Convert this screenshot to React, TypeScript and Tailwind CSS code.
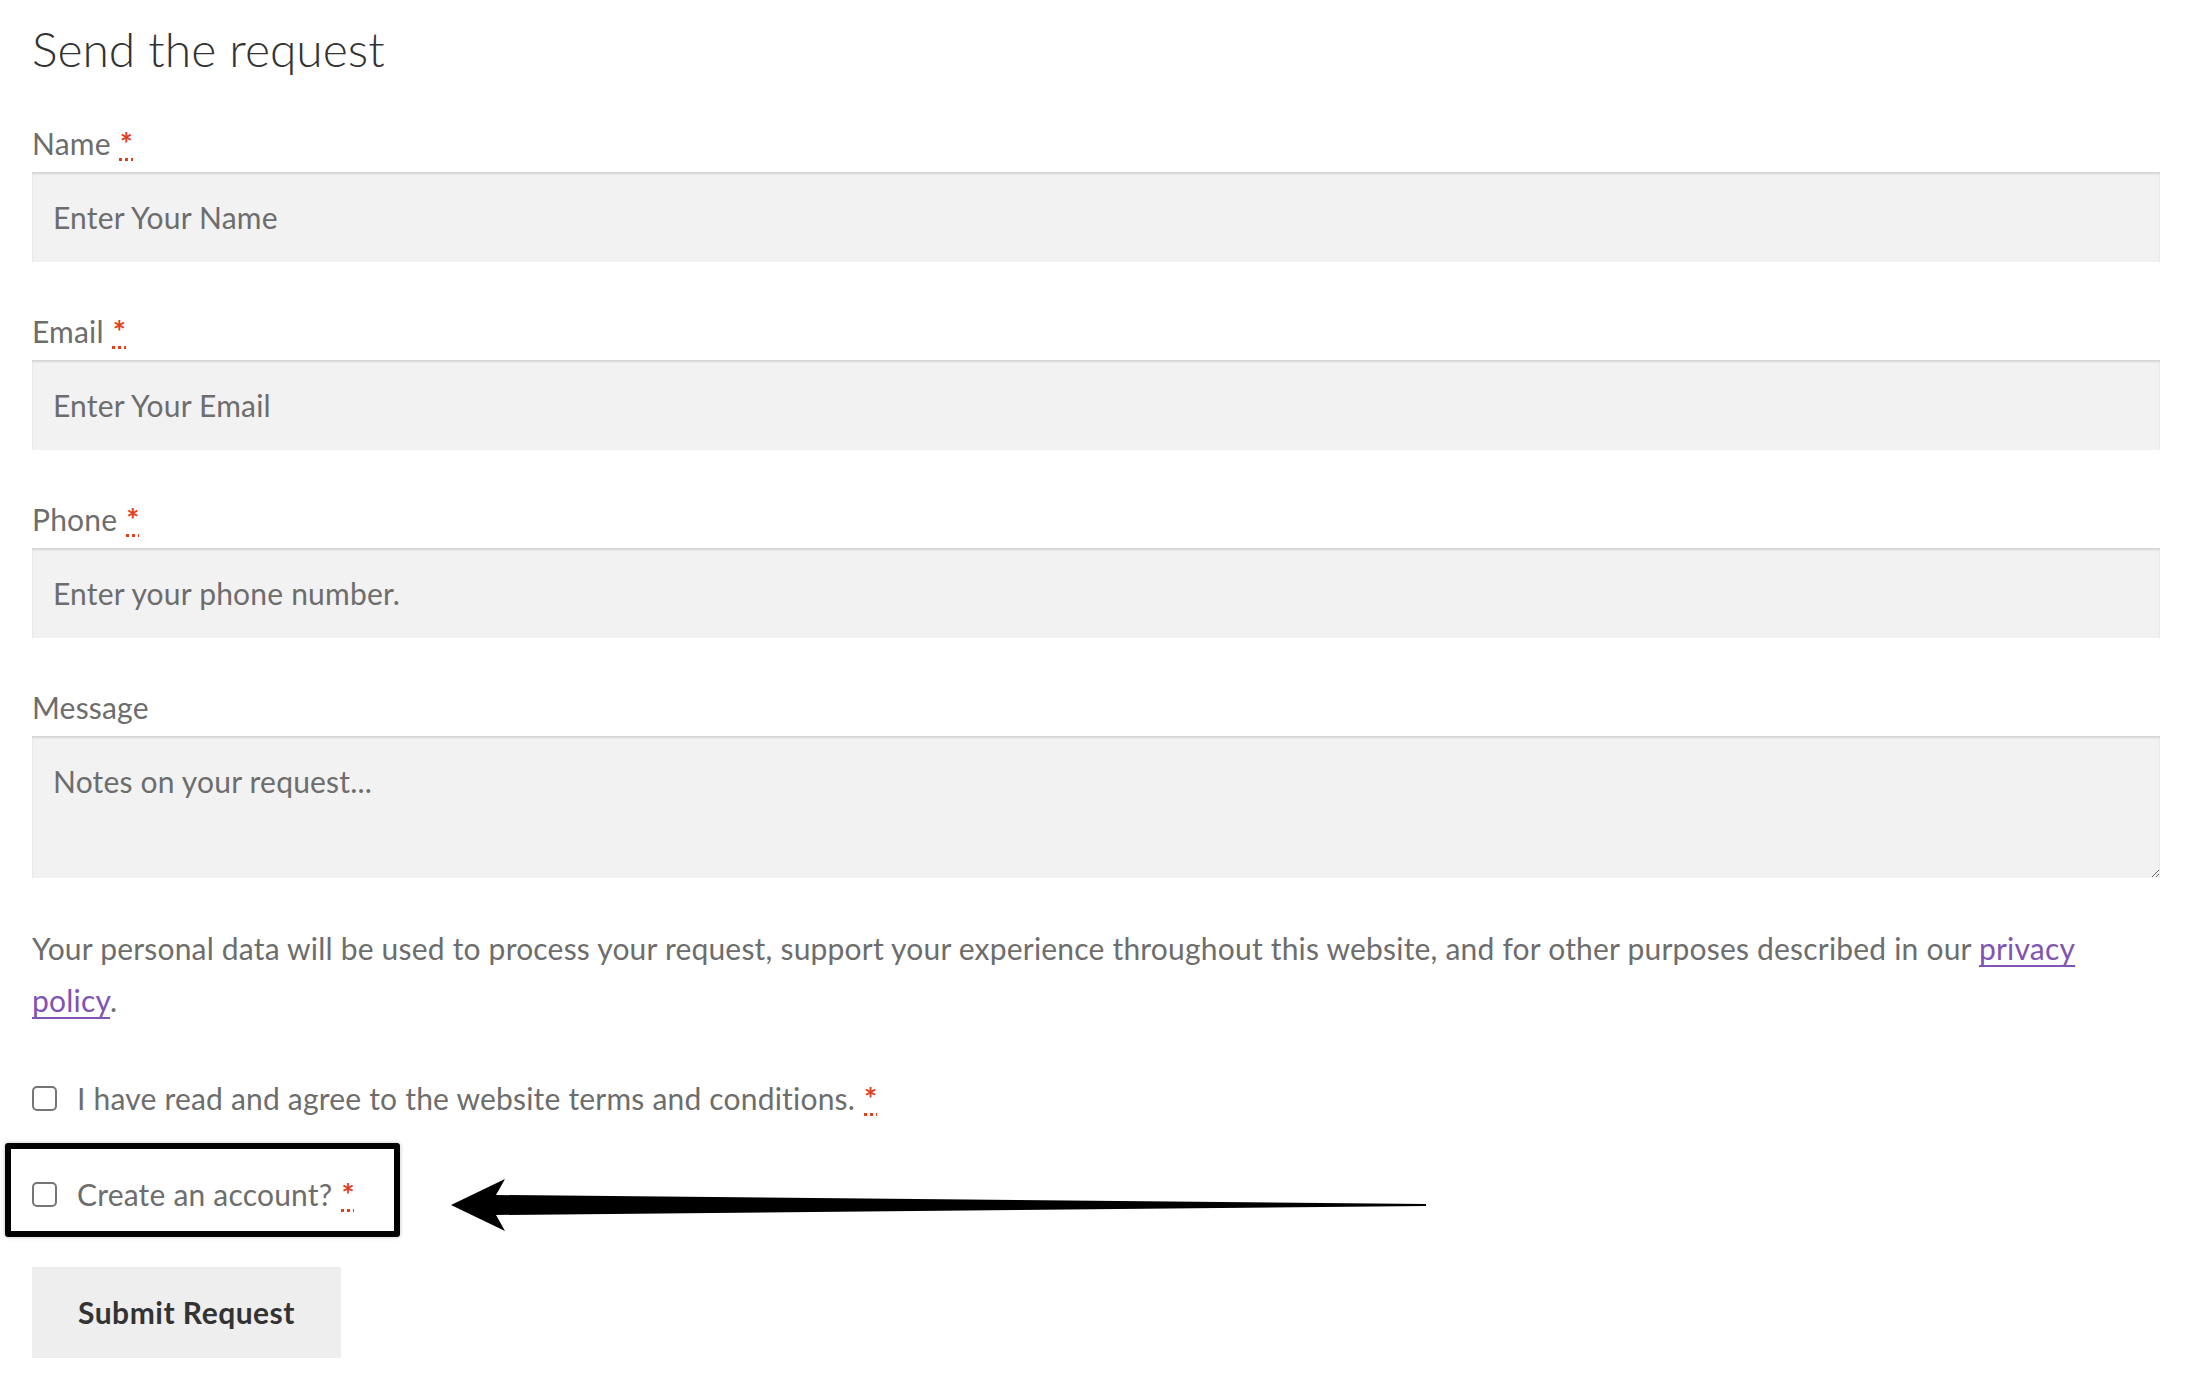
import React from "react";

function Req() {
  return (
    <abbr
      title="required"
      className="ml-[9px] text-[31px] font-bold text-[#e2401c] underline decoration-dotted decoration-[3px] decoration-[#e2401c] underline-offset-[3px]"
    >
      *
    </abbr>
  );
}

function Field({
  label,
  placeholder,
  required,
}: {
  label: string;
  placeholder: string;
  required?: boolean;
}) {
  return (
    <div className="mb-[49px]">
      <label className="block text-[30px] leading-[40px] tracking-[0.2px] text-[#6d6d6d] mb-[9px]">
        {label}
        {required && <Req />}
      </label>
      <input
        type="text"
        placeholder={placeholder}
        className="block w-full h-[90px] px-[21px] bg-[#f2f2f2] text-[30px] leading-[40px] tracking-[0.2px] text-[#43454b] placeholder:text-[#6d6d6d] shadow-[inset_0_2px_2px_rgba(0,0,0,0.125)] outline-none border-0"
      />
    </div>
  );
}

function Check({ label }: { label: string }) {
  return (
    <label className="flex items-center gap-[20px] h-[40px] text-[30px] leading-[40px] tracking-[0.2px] text-[#6d6d6d]">
      <span className="block w-[25px] h-[25px] shrink-0 rounded-[5px] border-2 border-[#767676] bg-white" />
      <span>
        {label}
        <Req />
      </span>
    </label>
  );
}

export default function App() {
  return (
    <div className="min-h-[1382px] w-full bg-white font-['Lato',sans-serif]">
      <div className="ml-[32px] w-[2128px] pt-[19px]">
        <h2 className="text-[48px] leading-[60px] font-light text-[#333333]">
          Send the request
        </h2>
        <form className="mt-[44px]" onSubmit={(e) => e.preventDefault()}>
          <Field label="Name" placeholder="Enter Your Name" required />
          <Field label="Email" placeholder="Enter Your Email" required />
          <Field label="Phone" placeholder="Enter your phone number." required />
          <div>
            <label className="block text-[30px] leading-[40px] tracking-[0.2px] text-[#6d6d6d] mb-[9px]">
              Message
            </label>
            <textarea
              placeholder="Notes on your request..."
              className="block w-full h-[142px] px-[21px] py-[25px] bg-[#f2f2f2] text-[30px] leading-[40px] tracking-[0.2px] text-[#43454b] placeholder:text-[#6d6d6d] shadow-[inset_0_2px_2px_rgba(0,0,0,0.125)] outline-none border-0 resize-y"
            />
          </div>
          <p className="mt-[44px] w-[2075px] text-[30px] leading-[52px] tracking-[0.2px] text-[#6d6d6d]">
            Your personal data will be used to process your request, support your
            experience throughout this website, and for other purposes described in
            our{" "}
            <a href="#" className="text-[#7f54b3] underline decoration-2 underline-offset-[5px]">
              privacy policy
            </a>
            .
          </p>
          <div className="mt-[52px]">
            <Check label="I have read and agree to the website terms and conditions." />
          </div>
          <div className="relative mt-[56px]">
            <Check label="Create an account?" />
            <div className="absolute left-[-27px] top-[-31px] w-[395px] h-[94px] border-[6px] border-black rounded-[3px] shadow-[0_0_4px_rgba(0,0,0,0.25)] pointer-events-none" />
            <svg
              className="absolute left-[413px] top-[1px] pointer-events-none"
              width="990"
              height="60"
              viewBox="0 0 990 60"
            >
              <path
                d="M6 30 L60 4 L51 20 L981 29 L981 31 L51 40 L60 56 Z"
                fill="#000"
              />
            </svg>
          </div>
          <button
            type="submit"
            className="mt-[53px] block w-[309px] h-[91px] bg-[#eeeeee] text-[30px] tracking-[0.5px] font-bold text-[#333333] text-center"
          >
            Submit Request
          </button>
        </form>
      </div>
    </div>
  );
}
